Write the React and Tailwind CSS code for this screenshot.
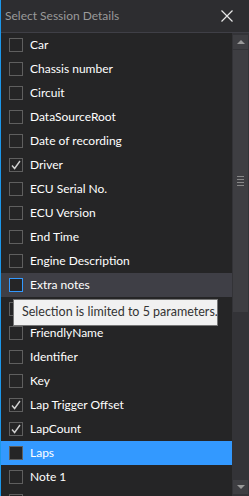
const items = [
  { name: "Car" },
  { name: "Chassis number" },
  { name: "Circuit" },
  { name: "DataSourceRoot" },
  { name: "Date of recording" },
  { name: "Driver", checked: true },
  { name: "ECU Serial No." },
  { name: "ECU Version" },
  { name: "End Time" },
  { name: "Engine Description" },
  { name: "Extra notes", hover: true },
  { name: "Fastest Lap" },
  { name: "FriendlyName" },
  { name: "Identifier" },
  { name: "Key" },
  { name: "Lap Trigger Offset", checked: true },
  { name: "LapCount", checked: true },
  { name: "Laps", selected: true },
  { name: "Note 1" },
  { name: "Note 2" },
];

function Check() {
  return (
    <svg width="12" height="12" viewBox="0 0 12 12" fill="none">
      <path d="M2 6.5 L4.6 9.5 L10 2" stroke="#d0d0d0" strokeWidth="1.4" />
    </svg>
  );
}

function Row({ item }) {
  let rowBg = "";
  if (item.hover) rowBg = "bg-[#3f3f46]";
  if (item.selected) rowBg = "bg-[#3399ff]";
  const boxBorder = item.hover ? "border-[#3399ff]" : "border-[#5f5f5f]";
  return (
    <div className={`h-[24px] flex items-center pl-[8px] ${rowBg}`}>
      <div className={`w-[14px] h-[14px] border ${boxBorder} bg-[#252526] flex items-center justify-center`}>
        {item.checked && <Check />}
      </div>
      <span className="ml-[7px] text-[12px] text-white whitespace-nowrap">{item.name}</span>
    </div>
  );
}

export default function App() {
  return (
    <div
      className="relative w-[249px] h-[496px] overflow-hidden bg-[#2d2d30] border-l border-[#1c97ea] flex flex-col"
      style={{ fontFamily: 'Lato, "Noto Sans", sans-serif' }}
    >
      <div className="h-[33px] shrink-0 flex items-center justify-between pl-[4px] pr-[16px] border-b border-[#3f3f46]">
        <span className="text-[12px] text-[#9a9a9a]">Select Session Details</span>
        <svg width="12" height="12" viewBox="0 0 12 12">
          <path d="M0.5 0.5 L11.5 11.5 M11.5 0.5 L0.5 11.5" stroke="#e8e8e8" strokeWidth="1.2" />
        </svg>
      </div>
      <div className="flex flex-1 min-h-0">
        <div className="flex-1 bg-[#252526] overflow-hidden">
          {items.map((it) => (
            <Row key={it.name} item={it} />
          ))}
        </div>
        <div className="w-[17px] bg-[#333337] flex flex-col pt-[2px] px-[1px] pb-[2px]">
          <div className="h-[14px] bg-[#3e3e42] flex items-center justify-center">
            <div className="w-0 h-0 border-l-[4px] border-r-[4px] border-b-[4px] border-l-transparent border-r-transparent border-b-[#999]" />
          </div>
          <div className="h-[262px] mt-[1px] bg-[#3e3e42] flex flex-col items-center justify-center gap-[2px]">
            <div className="w-[7px] h-px bg-[#888]" />
            <div className="w-[7px] h-px bg-[#888]" />
            <div className="w-[7px] h-px bg-[#888]" />
            <div className="w-[7px] h-px bg-[#888]" />
          </div>
          <div className="flex-1" />
          <div className="h-[14px] bg-[#3e3e42] flex items-center justify-center">
            <div className="w-0 h-0 border-l-[4px] border-r-[4px] border-t-[4px] border-l-transparent border-r-transparent border-t-[#999]" />
          </div>
        </div>
      </div>
      <div className="absolute left-[12px] top-[299px] w-[205px] h-[27px] bg-[#f1f1f1] border border-[#767676] flex items-center pl-[8px]">
        <span className="text-[12.5px] text-[#333] whitespace-nowrap">Selection is limited to 5 parameters.</span>
      </div>
    </div>
  );
}
